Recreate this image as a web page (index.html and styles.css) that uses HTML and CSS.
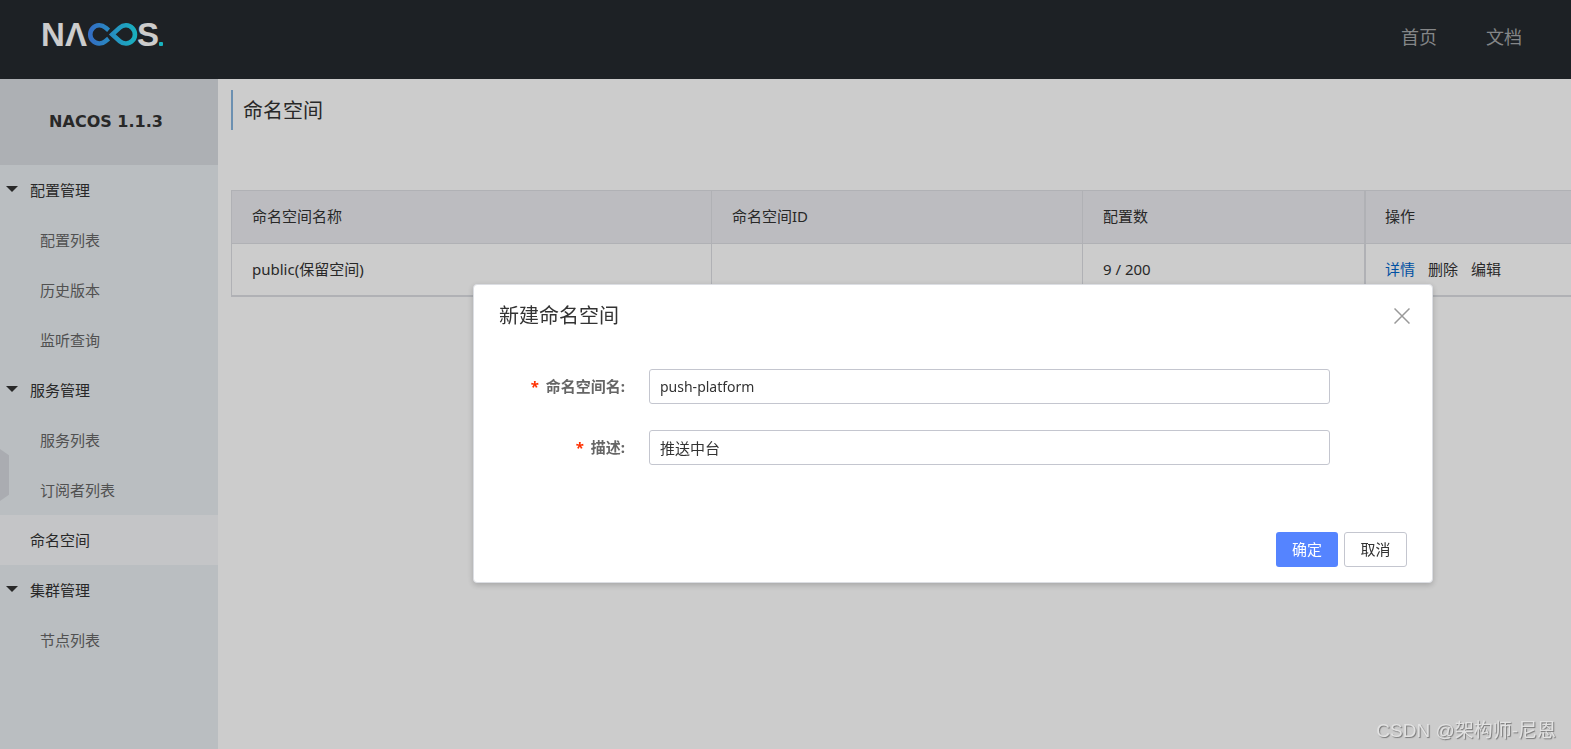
FILE: index.html
```html
<!DOCTYPE html>
<html lang="zh-CN">
<head>
<meta charset="utf-8">
<title>NACOS</title>
<link rel="stylesheet" href="styles.css">
</head>
<body>
<div class="app">
  <header class="topbar">
    <a class="logo" href="#" aria-label="NACOS">
      <svg class="logo-art" width="140" height="52" viewBox="30 8 140 52">
        <defs>
          <linearGradient id="loop" gradientUnits="userSpaceOnUse" x1="88" y1="0" x2="138" y2="0">
            <stop offset="0" stop-color="#4286f5"/>
            <stop offset="1" stop-color="#1ee0ee"/>
          </linearGradient>
        </defs>
        <text class="logo-text" x="41" y="46">N</text>
        <text class="logo-text" x="65" y="46">Λ</text>
        <text class="logo-text" x="137" y="46">S</text>
        <g fill="none" stroke="url(#loop)" stroke-width="4.6">
          <path d="M108.600 30.200L105.400 27.600A9.100 9.100 0 1 0 105.400 41.200L108.600 38.600"/>
          <path d="M112.300 34.400L119.800 27.600A9.100 9.100 0 1 1 119.800 41.200Z"/>
        </g>
        <rect x="159" y="42" width="4" height="4" rx="1" fill="#1ee0ee"/>
      </svg>
    </a>
    <nav class="topnav">
      <a href="#">首页</a>
      <a href="#">文档</a>
    </nav>
  </header>
  <div class="body">
    <aside class="sidebar">
      <h1 class="version">NACOS 1.1.3</h1>
      <nav class="menu">
        <a class="item group" href="#"><span class="caret"></span>配置管理</a>
        <a class="item sub" href="#">配置列表</a>
        <a class="item sub" href="#">历史版本</a>
        <a class="item sub" href="#">监听查询</a>
        <a class="item group" href="#"><span class="caret"></span>服务管理</a>
        <a class="item sub" href="#">服务列表</a>
        <a class="item sub" href="#">订阅者列表</a>
        <a class="item active" href="#">命名空间</a>
        <a class="item group" href="#"><span class="caret"></span>集群管理</a>
        <a class="item sub" href="#">节点列表</a>
      </nav>
      <button class="handle" type="button" aria-label="收起菜单"></button>
    </aside>
    <main class="main">
      <h2 class="title">命名空间</h2>
      <table class="table">
        <colgroup><col class="c1"><col class="c2"><col class="c3"><col class="c4"></colgroup>
        <thead>
          <tr><th>命名空间名称</th><th>命名空间ID</th><th>配置数</th><th class="ops">操作</th></tr>
        </thead>
        <tbody>
          <tr>
            <td>public(保留空间)</td><td></td><td>9 / 200</td>
            <td class="ops"><div class="actions"><a class="link" href="#">详情</a><a href="#">删除</a><a href="#">编辑</a></div></td>
          </tr>
        </tbody>
      </table>
    </main>
  </div>
</div>
<div class="overlay">
  <form class="dialog" role="dialog" aria-labelledby="dlg-title">
    <div class="dialog-head">
      <h3 id="dlg-title">新建命名空间</h3>
      <button class="close" type="button" aria-label="关闭">
        <svg width="16" height="16" viewBox="0 0 16 16"><path d="M.5.5l15 15M15.500.5l-15 15" fill="none" stroke="#999" stroke-width="1.500"/></svg>
      </button>
    </div>
    <div class="fields">
      <label for="ns-name"><span class="req">*</span>命名空间名:</label>
      <input id="ns-name" class="latin" type="text" value="push-platform">
      <label for="ns-desc"><span class="req">*</span>描述:</label>
      <input id="ns-desc" type="text" value="推送中台">
    </div>
    <div class="dialog-foot">
      <button class="btn primary" type="button">确定</button>
      <button class="btn" type="button">取消</button>
    </div>
  </form>
</div>
<p class="credit">CSDN @架构师-尼恩</p>
</body>
</html>
```
FILE: styles.css
```css
* { box-sizing: border-box; }

body {
  margin: 0;
  font: 15px/20px "Noto Sans", "Noto Sans CJK SC", sans-serif;
  color: #333;
  background: #fff;
  overflow: hidden;
}

h1, h2, h3, p { margin: 0; font-weight: 400; }
a { color: inherit; text-decoration: none; }
button, input { font: inherit; color: inherit; }

.app { display: flex; flex-direction: column; min-height: 100vh; }

.topbar {
  display: flex;
  justify-content: space-between;
  height: 79px;
  padding: 8px 49px 0 30px;
  background: #252a2f;
}
.logo, .logo-art { display: block; }
.logo-text { font: 700 33px "Liberation Sans", sans-serif; fill: #fff; }
.topnav { display: flex; gap: 49px; font-size: 18px; line-height: 58px; color: #a6a8aa; }

.body { display: flex; flex: 1; }

.sidebar { position: relative; flex: 0 0 218px; background: #e9eef2; }
.version {
  padding-right: 6px;
  font-family: "DejaVu Sans", sans-serif;
  font-size: 16px;
  font-weight: 700;
  line-height: 86px;
  text-align: center;
  background: #d9dce2;
}
.item { display: flex; align-items: center; height: 50px; padding-left: 30px; }
.group { gap: 12px; padding-left: 6px; }
.caret { border: 6px solid transparent; border-top-color: #333; border-bottom: 0; margin-bottom: 2px; }
.sub { padding-left: 40px; color: #666; }
.active { background: #f5f7f9; }
.handle {
  position: absolute;
  left: 0;
  top: 370px;
  width: 9px;
  height: 52px;
  padding: 0;
  border: 0;
  background: #d5d8de;
  clip-path: polygon(0 0, 100% 12%, 100% 88%, 0 100%);
}

.main { flex: 1; min-width: 0; padding: 11px 0 0 13px; overflow: hidden; }
.title {
  margin-bottom: 60px;
  padding: 2px 0 0 10px;
  border-left: 2px solid #87b5de;
  font-size: 20px;
  line-height: 38px;
}

.table {
  width: 101%;
  table-layout: fixed;
  border-collapse: separate;
  border-spacing: 0;
  border: 1px solid #dcdee3;
  border-bottom-width: 2px;
}
.c1 { width: 479px; }
.c2 { width: 371px; }
.c3 { width: 282px; }
.table th, .table td { height: 51px; padding: 0 20px 1px; text-align: left; font-weight: 400; border-left: 1px solid #dcdee3; }
.table th { height: 53px; padding-bottom: 2px; background: #ebecf1; border-bottom: 1px solid #dcdee3; }
.table th:first-child, .table td:first-child { border-left: 0; }
.table .ops { border-left-width: 2px; padding-left: 19px; }
.actions { display: flex; gap: 13px; }
.link { color: #06c; }

.overlay {
  position: fixed;
  inset: 0;
  display: flex;
  justify-content: flex-end;
  align-items: flex-start;
  padding: 284px 138px 0 20px;
  background: rgba(0, 0, 0, .2);
}
.dialog {
  width: 960px;
  padding: 0 25px 15px;
  background: #fff;
  border: 1px solid #dcdee3;
  border-radius: 4px;
  box-shadow: 0 2px 6px rgba(0, 0, 0, .2);
}
.dialog-head { display: flex; justify-content: space-between; align-items: center; height: 62px; padding-right: 22px; margin-right: -25px; }
.dialog-head h3 { font-size: 20px; line-height: 30px; }
.close { display: flex; padding: 0; border: 0; background: none; }
.fields { display: grid; grid-template-columns: 126px 1fr; gap: 26px 24px; padding: 22px 77px 67px 0; }
.fields label { display: flex; justify-content: flex-end; gap: 7px; line-height: 35px; font-weight: 700; color: #666; }
.req { color: #ff3000; }
.fields input { height: 35px; padding: 0 10px; border: 1px solid #c4c6cf; border-radius: 3px; background: #fff; outline: 0; }
.fields .latin { font-size: 14px; }
.dialog-foot { display: flex; justify-content: flex-end; gap: 6px; }
.btn { height: 35px; padding: 0 15px 1px; border: 1px solid #c4c6cf; border-radius: 3px; background: #fff; min-width: 63px; }
.primary { min-width: 62px; border: 0; background: #5584ff; color: #fff; }

.credit {
  position: fixed;
  right: 15px;
  bottom: 4px;
  font: 19px/28px "Liberation Sans", "Noto Sans CJK SC", sans-serif;
  color: #e2e2e2;
  text-shadow: 1px 1px 1px #777;
}
```
